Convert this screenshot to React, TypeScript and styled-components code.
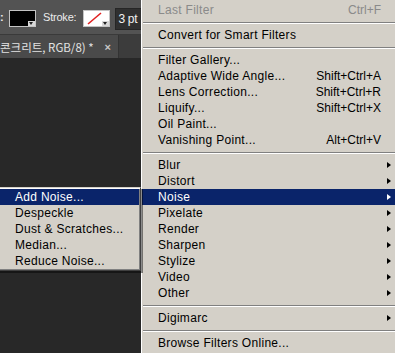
import React from 'react';
import styled, { createGlobalStyle } from 'styled-components';

const GlobalStyle = createGlobalStyle`
  html, body {
    margin: 0;
    padding: 0;
    width: 395px;
    height: 353px;
    overflow: hidden;
    background: #282828;
  }
  #root { height: 100%; }
`;

const Screen = styled.div`
  position: relative;
  display: flex;
  width: 395px;
  height: 353px;
  overflow: hidden;
  font-family: "Liberation Sans", Arial, sans-serif;
`;

const Workspace = styled.div`
  flex: none;
  width: 141px;
  display: flex;
  flex-direction: column;
`;

const OptionsBar = styled.div`
  height: 34px;
  flex: none;
  background: #535353;
  border-bottom: 1px solid #3a3a3a;
  display: flex;
  align-items: center;
  color: #ececec;
  font-size: 11px;
  white-space: nowrap;
  overflow: hidden;
`;

const Colon = styled.span`
  width: 9px;
  flex: none;
  font-weight: bold;
`;

const Swatch = styled.div<{ $fill: string }>`
  position: relative;
  flex: none;
  width: 25px;
  height: 15px;
  margin-top: 3px;
  background: ${p => p.$fill};
  border: 1px solid #c4c4c4;
`;

const DropCorner = styled.span`
  position: absolute;
  right: 0;
  bottom: 0;
  width: 7px;
  height: 5px;
  background: #d8d8d8;
  &::after {
    content: '';
    position: absolute;
    left: 1px;
    top: 1px;
    border-left: 2.5px solid transparent;
    border-right: 2.5px solid transparent;
    border-top: 3px solid #222;
  }
`;

const BarLabel = styled.span`
  flex: none;
  margin: 0 7px 0 7px;
  letter-spacing: -0.2px;
`;

const SizeField = styled.div`
  flex: none;
  width: 30px;
  height: 20px;
  margin-left: 5px;
  margin-top: 3px;
  background: #303030;
  border: 1px solid #262626;
  color: #f2f2f2;
  font-size: 12px;
  line-height: 20px;
  padding-left: 2px;
  letter-spacing: -0.3px;
`;

const TabBar = styled.div`
  height: 23px;
  flex: none;
  background: #3c3c3c;
  display: flex;
`;

const DocTab = styled.div`
  width: 118px;
  background: #4a4a4a;
  border-right: 1px solid #333;
  display: flex;
  align-items: center;
  color: #e2e2e2;
  font-family: "Noto Sans CJK KR", "Liberation Sans", sans-serif;
  font-size: 11.5px;
  white-space: nowrap;
`;

const CloseMark = styled.span`
  margin-left: auto;
  margin-right: 7px;
  color: #c8c8c8;
  font-family: "Liberation Sans", sans-serif;
  font-weight: bold;
  font-size: 11px;
`;

const Canvas = styled.div`
  flex: 1;
  background: #282828;
`;

const Menu = styled.div`
  flex: none;
  width: 257px;
  padding-top: 2px;
  background: #d4d0c8;
  border-left: 1px solid #ffffff;
`;

const Item = styled.div<{ $active?: boolean; $disabled?: boolean; $inset?: number }>`
  display: grid;
  grid-template-columns: 1fr auto 18px;
  align-items: center;
  height: 16px;
  padding-left: ${p => p.$inset ?? 16}px;
  background: ${p => (p.$active ? '#0a246a' : 'transparent')};
  color: ${p => (p.$active ? '#ffffff' : p.$disabled ? '#8a8a8a' : '#000000')};
  font-size: 12px;
  white-space: nowrap;
`;

const Label = styled.span`
  letter-spacing: 0.3px;
`;

const Shortcut = styled.span`
  text-align: right;
`;

const Arrow = styled.span`
  justify-self: start;
  margin-left: 6px;
  width: 0;
  height: 0;
  border-top: 3.5px solid transparent;
  border-bottom: 3.5px solid transparent;
  border-left: 4px solid currentColor;
`;

const Separator = styled.div`
  height: 9px;
  box-sizing: border-box;
  padding: 4px 1px 0 1px;
  &::before {
    content: '';
    display: block;
    border-top: 1px solid #808080;
    border-bottom: 1px solid #ffffff;
  }
`;

const SubMenu = styled.div`
  position: absolute;
  left: -3px;
  top: 187px;
  width: 140px;
  padding: 1px;
  background: #d4d0c8;
  border: 1px solid;
  border-color: #d4d0c8 #404040 #404040 #d4d0c8;
  box-shadow: inset 1px 1px 0 #ffffff, inset -1px -1px 0 #808080,
    2px 2px 0 rgba(0, 0, 0, 0.45);
`;

type Entry =
  | { kind: 'sep' }
  | { kind: 'item'; label: string; shortcut?: string; sub?: boolean; disabled?: boolean; active?: boolean };

const sep: Entry = { kind: 'sep' };
const it = (label: string, extra: Partial<Omit<Extract<Entry, { kind: 'item' }>, 'kind' | 'label'>> = {}): Entry => ({
  kind: 'item',
  label,
  ...extra,
});

const filterMenu: Entry[] = [
  it('Last Filter', { shortcut: 'Ctrl+F', disabled: true }),
  sep,
  it('Convert for Smart Filters'),
  sep,
  it('Filter Gallery...'),
  it('Adaptive Wide Angle...', { shortcut: 'Shift+Ctrl+A' }),
  it('Lens Correction...', { shortcut: 'Shift+Ctrl+R' }),
  it('Liquify...', { shortcut: 'Shift+Ctrl+X' }),
  it('Oil Paint...'),
  it('Vanishing Point...', { shortcut: 'Alt+Ctrl+V' }),
  sep,
  it('Blur', { sub: true }),
  it('Distort', { sub: true }),
  it('Noise', { sub: true, active: true }),
  it('Pixelate', { sub: true }),
  it('Render', { sub: true }),
  it('Sharpen', { sub: true }),
  it('Stylize', { sub: true }),
  it('Video', { sub: true }),
  it('Other', { sub: true }),
  sep,
  it('Digimarc', { sub: true }),
  sep,
  it('Browse Filters Online...'),
];

const noiseMenu = ['Add Noise...', 'Despeckle', 'Dust & Scratches...', 'Median...', 'Reduce Noise...'];

function App() {
  return (
    <Screen>
      <GlobalStyle />
      <Workspace>
        <OptionsBar>
          <Colon>:</Colon>
          <Swatch $fill="#000000">
            <DropCorner />
          </Swatch>
          <BarLabel>Stroke:</BarLabel>
          <Swatch $fill="#ffffff">
            <svg width="25" height="15" viewBox="0 0 25 15">
              <line x1="4" y1="13" x2="17" y2="2" stroke="#e02020" strokeWidth="1.6" />
            </svg>
            <DropCorner />
          </Swatch>
          <SizeField>3 pt</SizeField>
        </OptionsBar>
        <TabBar>
          <DocTab>
            콘크리트, RGB/8) *
            <CloseMark>×</CloseMark>
          </DocTab>
        </TabBar>
        <Canvas />
      </Workspace>

      <Menu>
        {filterMenu.map((e, i) =>
          e.kind === 'sep' ? (
            <Separator key={i} />
          ) : (
            <Item key={i} $active={e.active} $disabled={e.disabled}>
              <Label>{e.label}</Label>
              <Shortcut>{e.shortcut}</Shortcut>
              {e.sub ? <Arrow /> : <span />}
            </Item>
          )
        )}
      </Menu>

      <SubMenu>
        {noiseMenu.map((label, i) => (
          <Item key={label} $active={i === 0} $inset={16}>
            <Label>{label}</Label>
          </Item>
        ))}
      </SubMenu>
    </Screen>
  );
}

export default App;
